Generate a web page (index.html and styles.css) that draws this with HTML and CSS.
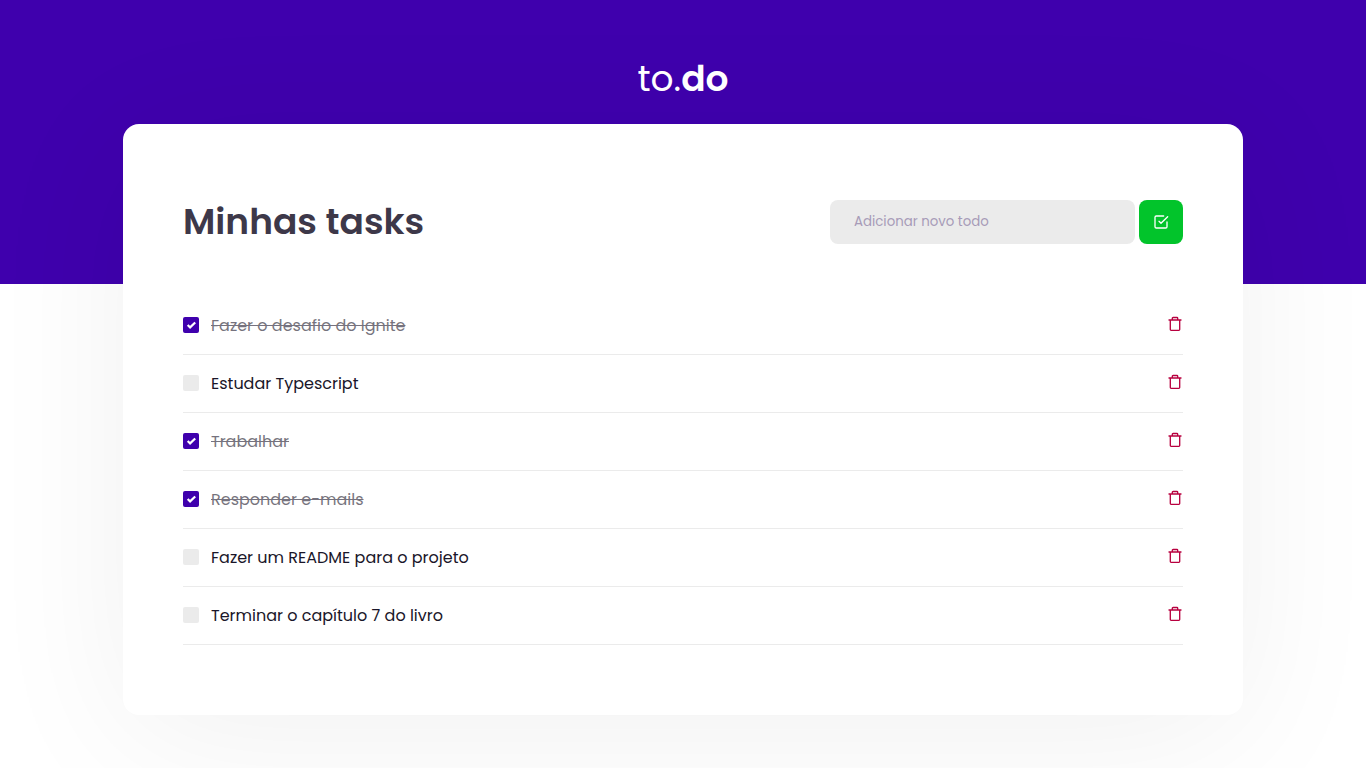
FILE: index.html
```html
<!DOCTYPE html>
<html lang="pt-BR">
<head>
<meta charset="utf-8">
<meta name="viewport" content="width=device-width, initial-scale=1">
<title>to.do</title>
<link rel="stylesheet" href="styles.css">
</head>
<body>
<svg class="sprite" aria-hidden="true">
  <symbol id="trash" viewBox="0 0 16 16">
    <path d="M2 4h12M3.3 4v9.6a.8.8 0 0 0 .8.8h7.8a.8.8 0 0 0 .8-.8V4M5.3 4V2.3a.8.8 0 0 1 .8-.8h3.8a.8.8 0 0 1 .8.8V4"/>
  </symbol>
</svg>
<header class="header">
  <div class="logo">to.<strong>do</strong></div>
</header>
<main class="card">
  <div class="card-top">
    <h1 class="title">Minhas tasks</h1>
    <form class="new-task">
      <input class="new-input" type="text" placeholder="Adicionar novo todo" aria-label="Adicionar novo todo">
      <button class="add" type="button" aria-label="Adicionar">
        <svg class="icon" viewBox="0 0 24 24"><path d="M9 11l3 3L22 4M21 12v7a2 2 0 0 1-2 2H5a2 2 0 0 1-2-2V5a2 2 0 0 1 2-2h11"/></svg>
      </button>
    </form>
  </div>
  <ul class="tasks">
    <li class="task">
      <label class="task-label"><input class="check" type="checkbox" checked><span class="task-text">Fazer o desafio do Ignite</span></label>
      <button class="remove" type="button" aria-label="Remover"><svg class="icon icon-trash"><use href="#trash"/></svg></button>
    </li>
    <li class="task">
      <label class="task-label"><input class="check" type="checkbox"><span class="task-text">Estudar Typescript</span></label>
      <button class="remove" type="button" aria-label="Remover"><svg class="icon icon-trash"><use href="#trash"/></svg></button>
    </li>
    <li class="task">
      <label class="task-label"><input class="check" type="checkbox" checked><span class="task-text">Trabalhar</span></label>
      <button class="remove" type="button" aria-label="Remover"><svg class="icon icon-trash"><use href="#trash"/></svg></button>
    </li>
    <li class="task">
      <label class="task-label"><input class="check" type="checkbox" checked><span class="task-text">Responder e-mails</span></label>
      <button class="remove" type="button" aria-label="Remover"><svg class="icon icon-trash"><use href="#trash"/></svg></button>
    </li>
    <li class="task">
      <label class="task-label"><input class="check" type="checkbox"><span class="task-text">Fazer um README para o projeto</span></label>
      <button class="remove" type="button" aria-label="Remover"><svg class="icon icon-trash"><use href="#trash"/></svg></button>
    </li>
    <li class="task">
      <label class="task-label"><input class="check" type="checkbox"><span class="task-text">Terminar o capítulo 7 do livro</span></label>
      <button class="remove" type="button" aria-label="Remover"><svg class="icon icon-trash"><use href="#trash"/></svg></button>
    </li>
  </ul>
</main>
</body>
</html>
```
FILE: styles.css
```css
* {
  box-sizing: border-box;
  margin: 0;
  padding: 0;
}

body {
  min-height: 100vh;
  background: #fff;
  color: #1a1629;
  font-family: Poppins, Inter, sans-serif;
  font-size: 16px;
  -webkit-font-smoothing: antialiased;
}

button, input {
  border: 0;
  font-family: inherit;
}

.sprite {
  position: absolute;
  width: 0;
  height: 0;
}

.header {
  display: flex;
  justify-content: center;
  height: 284px;
  padding-top: 52px;
  background: #3f00ad;
}

.logo {
  color: #fff;
  font-size: 36px;
  font-weight: 400;
  line-height: 54px;
}

.logo strong {
  font-weight: 600;
}

.card {
  width: calc(100% - 32px);
  max-width: 1120px;
  margin: -160px auto 0;
  padding: 76px 60px 70px;
  border-radius: 16px;
  background: #fff;
  box-shadow: 0 20px 150px rgba(0, 0, 0, 0.06);
}

.card-top {
  display: flex;
  align-items: center;
  justify-content: space-between;
  margin-bottom: 53px;
}

.title {
  color: #3d3849;
  font-size: 36px;
  font-weight: 600;
  line-height: 44px;
}

.new-task {
  display: flex;
  gap: 4px;
}

.new-input {
  width: 305px;
  height: 44px;
  padding: 0 24px;
  border-radius: 8px;
  background: #ebebeb;
  color: #3d3849;
}

.new-input::placeholder {
  color: #a79bb8;
}

.add {
  display: flex;
  align-items: center;
  justify-content: center;
  width: 44px;
  height: 44px;
  border-radius: 8px;
  background: #02c42b;
  color: #fff;
}

.icon {
  width: 16px;
  height: 16px;
  fill: none;
  stroke: currentColor;
  stroke-width: 2;
  stroke-linecap: round;
  stroke-linejoin: round;
}

.icon-trash {
  stroke-width: 1.33;
}

.tasks {
  list-style: none;
}

.task {
  display: flex;
  align-items: center;
  justify-content: space-between;
  padding: 17px 0 16px;
  border-bottom: 1px solid #ebebeb;
}

.task-label {
  display: flex;
  align-items: center;
  gap: 12px;
  line-height: 24px;
}

.check {
  appearance: none;
  width: 16px;
  height: 16px;
  margin-bottom: 2px;
  border-radius: 2px;
  background: #ebebeb;
}

.check:checked {
  background: #3f00ad url("data:image/svg+xml,%3Csvg xmlns='http://www.w3.org/2000/svg' viewBox='0 0 16 16'%3E%3Cpath d='M4.7 7.9l2.4 2.5 5.1-4.9' fill='none' stroke='white' stroke-width='2.2'/%3E%3C/svg%3E") center / 16px;
}

.check:checked + .task-text {
  opacity: 0.6;
  text-decoration: line-through;
}

.remove {
  display: flex;
  padding-bottom: 4px;
  background: none;
  color: #b8003f;
}
```
